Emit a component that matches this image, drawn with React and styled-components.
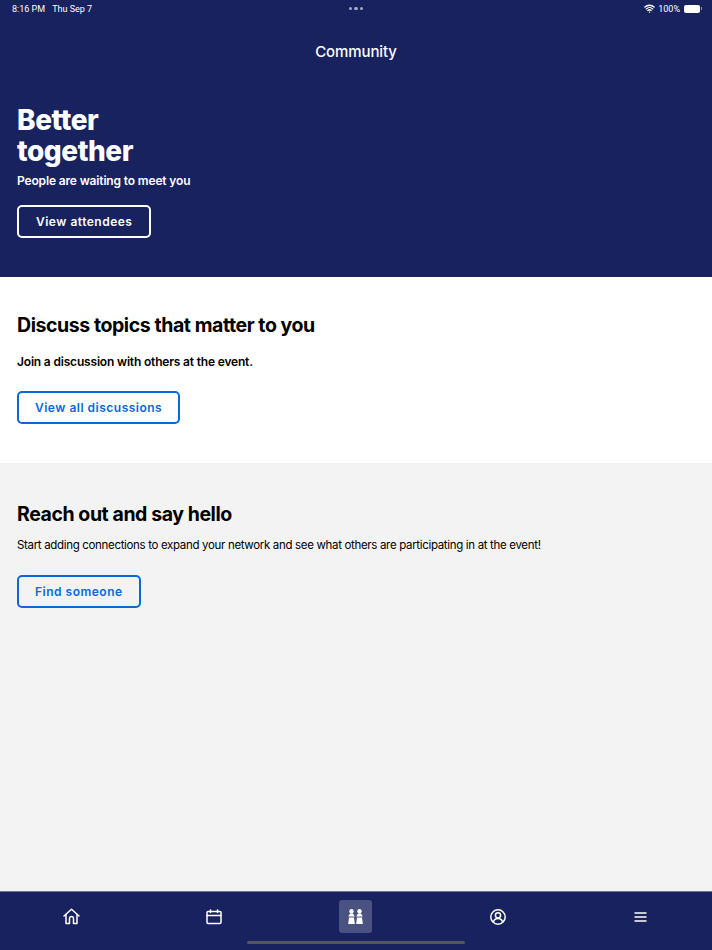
import React from 'react';
import styled, { createGlobalStyle } from 'styled-components';
import { Wifi } from 'lucide-react';

const GlobalStyle = createGlobalStyle`
  html, body {
    margin: 0;
    padding: 0;
    background: #f3f3f3;
  }
  * {
    box-sizing: border-box;
  }
`;

const Page = styled.div`
  width: 712px;
  height: 950px;
  display: flex;
  flex-direction: column;
  font-family: Inter, 'Liberation Sans', sans-serif;
  color: #000;
  overflow: hidden;
`;

const Hero = styled.header`
  height: 277px;
  flex: none;
  background: #18225f;
  color: #fff;
  display: flex;
  flex-direction: column;
`;

const StatusBar = styled.div`
  height: 17px;
  padding: 0 12px;
  display: grid;
  grid-template-columns: 1fr auto 1fr;
  align-items: center;
  font-family: Roboto, 'Liberation Sans', sans-serif;
  font-size: 9px;
  color: #fff;
`;

const StatusLeft = styled.div`
  display: flex;
  gap: 7px;
`;

const Dots = styled.div`
  display: flex;
  gap: 2px;
`;

const Dot = styled.span`
  width: 3.5px;
  height: 3.5px;
  border-radius: 50%;
  background: #a4a9c8;
`;

const StatusRight = styled.div`
  display: flex;
  justify-content: flex-end;
  align-items: center;
  gap: 3px;
`;

const Battery = styled.span`
  position: relative;
  width: 16px;
  height: 8px;
  border-radius: 2px;
  background: #fff;
  margin-left: 1px;

  &::after {
    content: '';
    position: absolute;
    right: -2px;
    top: 2.5px;
    width: 1px;
    height: 3px;
    background: #8c90b0;
  }
`;

const Title = styled.h1`
  margin: 25px 0 0;
  font-size: 15px;
  line-height: 20px;
  font-weight: 500;
  letter-spacing: -0.1px;
  text-align: center;
`;

const HeroBody = styled.div`
  padding: 43px 17px 0;
`;

const Heading = styled.h2`
  margin: 0;
  width: 160px;
  font-size: 28px;
  line-height: 31px;
  font-weight: 800;
  letter-spacing: -0.45px;
`;

const HeroText = styled.p`
  margin: 5px 0 16px;
  font-size: 12px;
  line-height: 17px;
  font-weight: 600;
  letter-spacing: -0.15px;
`;

const OutlineButton = styled.button`
  display: block;
  height: 33px;
  padding: 0 ${(p) => (p.$light ? '17px' : '16px')};
  border: 2px solid ${(p) => (p.$light ? '#fff' : '#0a68d8')};
  border-radius: 5px;
  background: transparent;
  color: ${(p) => (p.$light ? '#fff' : '#0a68d8')};
  font-family: inherit;
  font-size: 12px;
  font-weight: 600;
  letter-spacing: 0.5px;
`;

const Section = styled.section`
  background: ${(p) => (p.$grey ? '#f3f3f3' : '#fff')};
  padding: ${(p) => (p.$grey ? '39px' : '36px')} 17px 0;
  height: ${(p) => (p.$grey ? 'auto' : '186px')};
  flex: ${(p) => (p.$grey ? '1' : 'none')};
`;

const SectionTitle = styled.h3`
  margin: 0;
  font-size: 19.5px;
  line-height: 24px;
  font-weight: 700;
  letter-spacing: -0.43px;
`;

const SectionText = styled.p`
  margin: ${(p) => (p.$bold ? '16px 0 21px' : '11px 0 21px')};
  font-size: ${(p) => (p.$bold ? '12px' : '11.5px')};
  line-height: 17px;
  font-weight: ${(p) => (p.$bold ? 600 : 400)};
  letter-spacing: ${(p) => (p.$bold ? '-0.18px' : '-0.33px')};
`;

const TabBar = styled.nav`
  position: relative;
  height: 59px;
  flex: none;
  background: #18225f;
  border-top: 1px solid #6d7296;
  display: grid;
  grid-template-columns: repeat(5, 142.4px);
  justify-items: center;
  padding-top: 8px;
`;

const Tab = styled.div`
  width: 33px;
  height: 33px;
  border-radius: 3px;
  display: flex;
  align-items: center;
  justify-content: center;
  background: ${(p) => (p.$active ? '#4a5282' : 'transparent')};
  color: #fff;
`;

const HomeIndicator = styled.div`
  position: absolute;
  left: 247px;
  bottom: 6px;
  width: 218px;
  height: 3.5px;
  border-radius: 2px;
  background: #54565f;
`;

const Icon = styled.svg`
  display: block;
  fill: none;
  stroke: currentColor;
  stroke-width: 1.5;
  stroke-linecap: round;
  stroke-linejoin: round;
`;

const App = () => (
  <Page>
    <GlobalStyle />
    <Hero>
      <StatusBar>
        <StatusLeft>
          <span>8:16 PM</span>
          <span>Thu Sep 7</span>
        </StatusLeft>
        <Dots>
          <Dot />
          <Dot />
          <Dot />
        </Dots>
        <StatusRight>
          <Wifi size={11} strokeWidth={3} />
          <span>100%</span>
          <Battery />
        </StatusRight>
      </StatusBar>
      <Title>Community</Title>
      <HeroBody>
        <Heading>Better together</Heading>
        <HeroText>People are waiting to meet you</HeroText>
        <OutlineButton $light>View attendees</OutlineButton>
      </HeroBody>
    </Hero>
    <Section>
      <SectionTitle>Discuss topics that matter to you</SectionTitle>
      <SectionText $bold>Join a discussion with others at the event.</SectionText>
      <OutlineButton>View all discussions</OutlineButton>
    </Section>
    <Section $grey>
      <SectionTitle>Reach out and say hello</SectionTitle>
      <SectionText>
        Start adding connections to expand your network and see what others are participating in at the event!
      </SectionText>
      <OutlineButton>Find someone</OutlineButton>
    </Section>
    <TabBar>
      <Tab>
        <Icon width="17" height="17" viewBox="0 0 17 17">
          <path d="M1 8 8.5 1.2 16 8" />
          <path d="M3 6.500V15.500H6.500V10.500a2 2 0 0 1 4 0V15.500H14V6.500" />
        </Icon>
      </Tab>
      <Tab>
        <Icon width="16" height="16" viewBox="0 0 16 16">
          <rect x="1" y="2.500" width="14" height="12" rx="1" />
          <path d="M1 6.500H15M4.500 1V3.500M11.500 1V3.500" />
        </Icon>
      </Tab>
      <Tab $active>
        <svg width="15" height="15" viewBox="0 0 15 15" fill="#fff">
          <circle cx="3.500" cy="2.200" r="2.200" />
          <circle cx="11.500" cy="2.200" r="2.200" />
          <path d="M2 4.500h3L6.800 7.400H0.200z" />
          <path d="M10 4.500h3L14.800 7.400H8.200z" />
          <path d="M1 8.400h5L6.800 15H0.200z" />
          <path d="M9 8.400h5L14.800 15H8.200z" />
        </svg>
      </Tab>
      <Tab>
        <Icon width="16" height="16" viewBox="0 0 16 16">
          <circle cx="8" cy="8" r="7.200" />
          <circle cx="8" cy="6.300" r="2.600" />
          <path d="M3.400 13c.7-2.300 2.500-3.400 4.600-3.400s3.900 1.100 4.600 3.400" />
        </Icon>
      </Tab>
      <Tab>
        <Icon width="13" height="10" viewBox="0 0 13 10">
          <path d="M0.500 1H12.500M0.500 5H12.500M0.500 9H12.500" strokeLinecap="butt" />
        </Icon>
      </Tab>
      <HomeIndicator />
    </TabBar>
  </Page>
);

export default App;
